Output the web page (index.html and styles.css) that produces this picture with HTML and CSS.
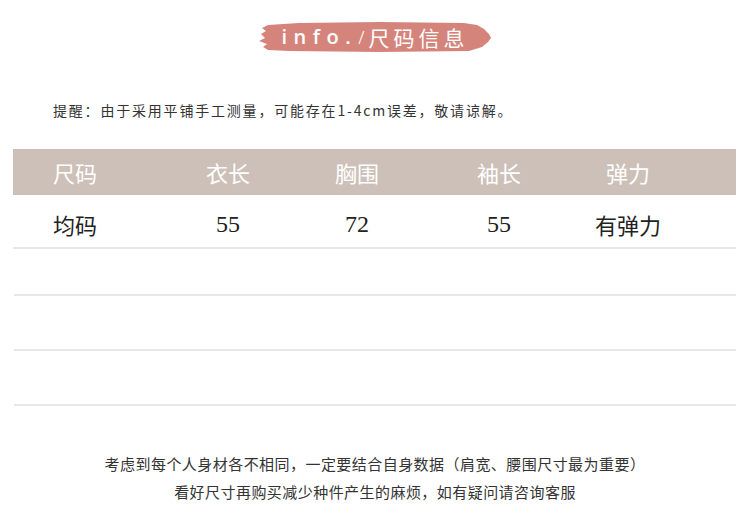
FILE: index.html
```html
<!DOCTYPE html>
<html lang="zh">
<head>
<meta charset="utf-8">
<link rel="stylesheet" href="styles.css">
</head>
<body>
<div class="page">
  <div class="title-wrap">
    <div class="banner">
      <span class="en">info.</span><span class="slash">/</span><span class="zh">尺码信息</span>
    </div>
  </div>
  <p class="note">提醒：由于采用平铺手工测量，可能存在1-4cm误差，敬请谅解。</p>
  <div class="table">
    <div class="row head">
      <div class="cell">尺码</div>
      <div class="cell">衣长</div>
      <div class="cell">胸围</div>
      <div class="cell">袖长</div>
      <div class="cell">弹力</div>
    </div>
    <div class="row data">
      <div class="cell">均码</div>
      <div class="cell num">55</div>
      <div class="cell num">72</div>
      <div class="cell num">55</div>
      <div class="cell">有弹力</div>
    </div>
    <div class="row empty r1"></div>
    <div class="row empty r2"></div>
    <div class="row empty r3"></div>
  </div>
  <div class="footer">
    <p>考虑到每个人身材各不相同，一定要结合自身数据（肩宽、腰围尺寸最为重要）</p>
    <p>看好尺寸再购买减少种件产生的麻烦，如有疑问请咨询客服</p>
  </div>
</div>
</body>
</html>
```
FILE: styles.css
```css
html, body {
  margin: 0;
  padding: 0;
  background: #ffffff;
}
.page {
  width: 750px;
  height: 530px;
  font-family: "Noto Sans CJK SC", "Noto Sans", sans-serif;
  color: #333;
}
.title-wrap {
  display: flex;
  justify-content: center;
  padding-top: 22px;
  padding-left: 0;
}
.banner {
  width: 232px;
  height: 30px;
  background: #d5847c;
  display: flex;
  align-items: center;
  justify-content: center;
  padding-left: 0;
  box-sizing: border-box;
  color: #fff;
  clip-path: polygon(9px 3px, 40px 1px, 120px 0px, 205px 1px, 218px 3px, 225px 7px, 230px 12px, 232px 16px, 229px 20px, 223px 25px, 210px 29px, 120px 30px, 30px 29px, 9px 28px, 4px 25px, 8px 22px, 0px 19px, 6px 16px, 2px 12px, 7px 9px, 3px 6px);
}
.en {
  font-family: "Open Sans", "Noto Sans", sans-serif;
  font-size: 20px;
  font-weight: 600;
  letter-spacing: 6.5px;
  line-height: 30px;
}
.slash {
  font-family: "Noto Sans", sans-serif;
  font-size: 18px;
  font-weight: 300;
  margin: 0 4px 0 1px;
  line-height: 30px;
}
.zh {
  font-size: 21px;
  letter-spacing: 4px;
  line-height: 30px;
}
.note {
  margin: 48px 0 0 53px;
  font-size: 14px;
  letter-spacing: 1.8px;
  line-height: 20px;
  color: #333;
}
.table {
  margin: 29px 14px 0 13px;
}
.row {
  display: grid;
  grid-template-columns: 124px 182px 76px 208px 50px;
  align-items: center;
}
.cell {
  display: flex;
  justify-content: center;
  white-space: nowrap;
}
.head {
  height: 46px;
  background: #cdc0b8;
  color: #fff;
  font-size: 22px;
}
.data {
  height: 52px;
  border-bottom: 2px solid #e8e8e8;
  font-size: 22px;
  color: #222;
}
.data .cell {
  padding-top: 6px;
}
.num {
  font-family: "Liberation Serif", serif;
  font-size: 24px;
}
.empty {
  margin-left: 1px;
  border-bottom: 2px solid #e8e8e8;
}
.r1 { height: 45px; }
.r2 { height: 53px; }
.r3 { height: 53px; }
.footer {
  margin-top: 44px;
  text-align: center;
  font-size: 15px;
  letter-spacing: 0.45px;
  color: #333;
}
.footer p {
  margin: 0;
  line-height: 28px;
}
```
